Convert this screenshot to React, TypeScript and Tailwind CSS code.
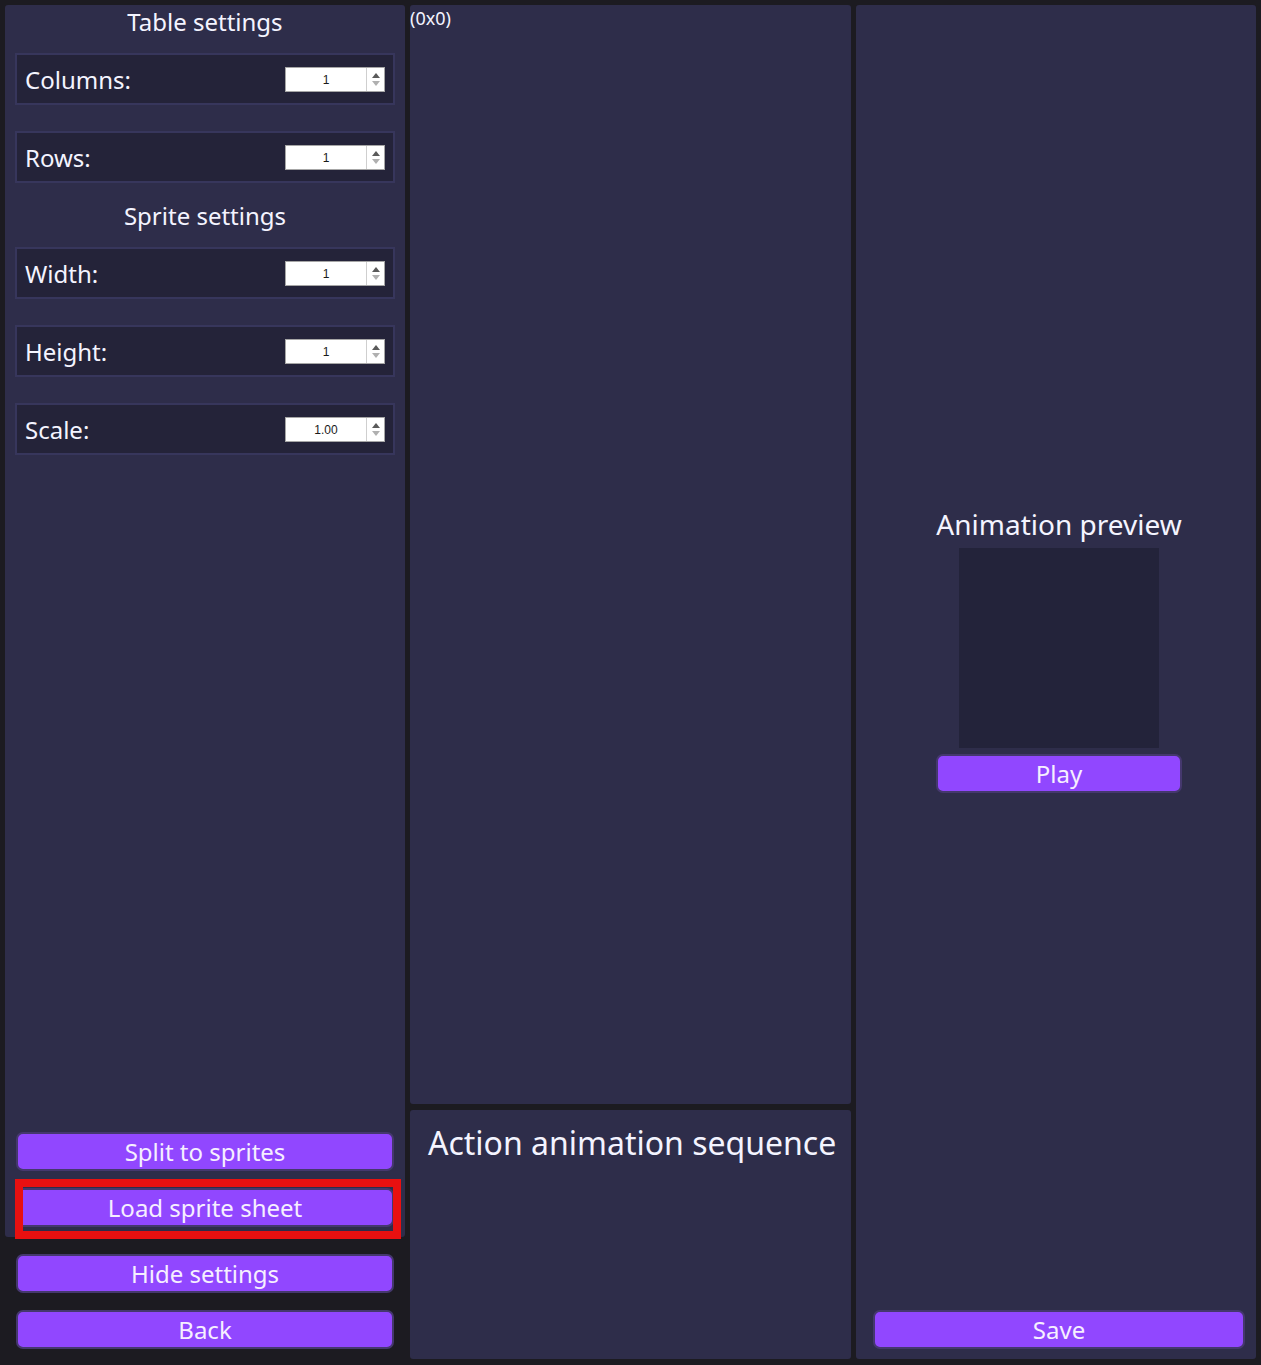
import React from 'react'

const font = { fontFamily: '"Noto Sans", "Open Sans", sans-serif' }

function Spin({ value }: { value: string }) {
  return (
    <div className="w-[100px] h-[25px] bg-white border border-[#a6a6a6] flex">
      <div className="flex-1 flex items-center justify-center pt-[1px] text-[12px] text-[#1a1a1a] font-['Liberation_Sans',sans-serif]">
        {value}
      </div>
      <div className="w-[18px] border-l border-[#cfcfcf] flex flex-col items-center justify-center gap-[3px]">
        <div className="w-0 h-0 border-x-[4px] border-x-transparent border-b-[5px] border-b-[#5a5a5a]" />
        <div className="w-0 h-0 border-x-[4px] border-x-transparent border-t-[5px] border-t-[#b0b0b0]" />
      </div>
    </div>
  )
}

function Row({ label, value }: { label: string; value: string }) {
  return (
    <div className="mx-[10px] h-[52px] border-2 border-[#37365c] bg-[#242339] flex items-center justify-between px-[8px]">
      <span className="text-[24px] leading-[34px] pt-[1px] text-[#f4f4ff]">{label}</span>
      <Spin value={value} />
    </div>
  )
}

function Button({ label, className = '' }: { label: string; className?: string }) {
  return (
    <button
      className={`h-[39px] rounded-[7px] border-2 border-[#45386e] bg-[#9147ff] text-[24px] leading-none text-[#f6efff] flex items-center justify-center ${className}`}
    >
      {label}
    </button>
  )
}

export default function App() {
  return (
    <div
      style={font}
      className="w-[1261px] h-[1365px] bg-[#1c1b21] pt-[5px] pb-[6px] px-[5px] flex gap-[5px] overflow-hidden"
    >
      {/* Settings column */}
      <div className="w-[400px] flex flex-col">
        <div className="h-[1232px] bg-[#2e2d4a] rounded-[3px] flex flex-col relative">
          <h2 className="text-[24px] leading-[34px] text-center text-[#f4f4ff]">Table settings</h2>
          <div className="mt-[14px]">
            <Row label="Columns:" value="1" />
          </div>
          <div className="mt-[26px]">
            <Row label="Rows:" value="1" />
          </div>
          <h2 className="mt-[16px] text-[24px] leading-[34px] text-center text-[#f4f4ff]">Sprite settings</h2>
          <div className="mt-[14px]">
            <Row label="Width:" value="1" />
          </div>
          <div className="mt-[26px]">
            <Row label="Height:" value="1" />
          </div>
          <div className="mt-[26px]">
            <Row label="Scale:" value="1.00" />
          </div>
          <div className="flex-1" />
          <Button label="Split to sprites" className="mx-[11px]" />
          <Button label="Load sprite sheet" className="mx-[11px] mt-[17px] mb-[10px]" />
          {/* highlight annotation */}
          <div className="absolute left-[10px] top-[1174px] w-[386px] h-[60px] border-[8px] border-[#e81010] pointer-events-none" />
        </div>
        <Button label="Hide settings" className="mx-[11px] mt-[17px]" />
        <Button label="Back" className="mx-[11px] mt-[17px]" />
      </div>

      {/* Sheet view + sequence */}
      <div className="w-[441px] flex flex-col gap-[6px]">
        <div className="h-[1099px] bg-[#2e2d4a] rounded-[3px]">
          <span className="block text-[18px] leading-[26px] text-[#f4f4ff]">(0x0)</span>
        </div>
        <div className="flex-1 bg-[#2e2d4a] rounded-[3px] pt-[11px] pl-[18px]">
          <h2 className="text-[32px] leading-[44px] text-[#f4f4ff]">Action animation sequence</h2>
        </div>
      </div>

      {/* Preview */}
      <div className="w-[400px] bg-[#2e2d4a] rounded-[3px] flex flex-col">
        <div className="h-[1300px] flex flex-col items-center justify-center pb-[12px] pl-[6px]">
          <div className="flex flex-col items-stretch">
            <h2 className="text-[28px] leading-[38px] text-center text-[#f4f4ff]">Animation preview</h2>
            <div className="mt-[5px] self-center w-[200px] h-[200px] bg-[#23233a]" />
            <Button label="Play" className="mt-[6px]" />
          </div>
        </div>
        <Button label="Save" className="ml-[17px] mr-[11px] mt-[5px]" />
      </div>
    </div>
  )
}
